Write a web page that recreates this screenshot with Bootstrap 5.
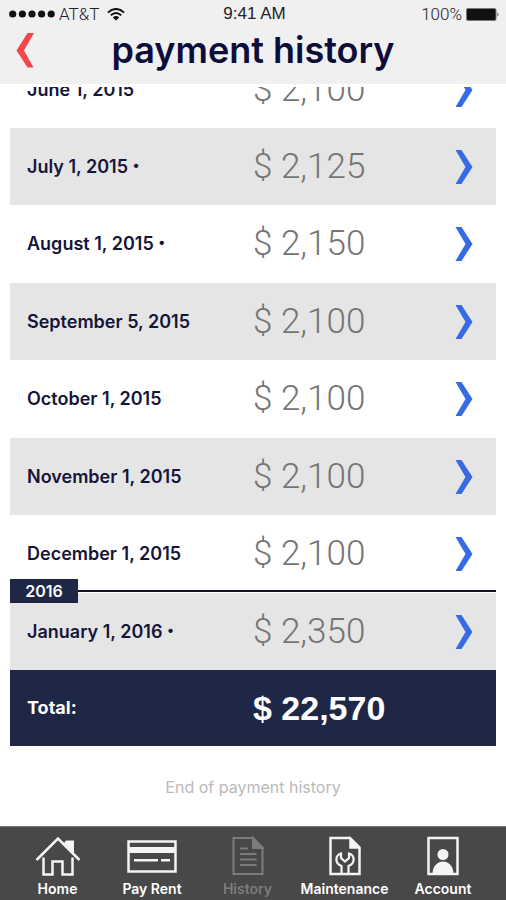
<!DOCTYPE html>
<html lang="en">
<head>
<meta charset="utf-8">
<meta name="viewport" content="width=device-width, initial-scale=1">
<title>Payment history</title>
<link href="https://cdn.jsdelivr.net/npm/bootstrap@5.3.0/dist/css/bootstrap.min.css" rel="stylesheet">
<style>
  :root { --navy: #1e2846; --ink: #15153a; --stripe: #e5e5e5; --bar: #484848; }
  body { font-family: Inter, "Open Sans", sans-serif; background: #fff; color: var(--ink); }
  svg { display: block; }
  .app-head { background: #f0f0f0; border-bottom: 3px solid #fff; height: 87px; }
  .status-bar { height: 28px; padding: 0 6px 0 9px; font-size: 17px; line-height: 28px; color: #222; }
  .status-side { flex: 1 1 0; }
  .carrier, .charge { font-family: Roboto, sans-serif; font-weight: 300; }
  .clock { font-family: "Liberation Sans", sans-serif; }
  .title-bar { height: 44px; padding: 0 15px; }
  .title-bar h1 { font-size: 36px; line-height: 44px; font-weight: 600; color: #0d0d3a; }
  .back-btn { width: 22px; }
  .history { padding: 52px 10px 0; }
  .pay-table { table-layout: fixed; line-height: 24px; }
  .pay-table th, .pay-table td { padding: 0; vertical-align: middle; border: 0; }
  .pay-table tr { height: 78px; }
  .pay-table tr:first-child { height: 76px; }
  .pay-table tr.alt { height: 77px; background: var(--stripe); }
  .col-date { width: 50%; }
  .col-go { width: 50px; }
  .pay-date { font-size: 18px; font-weight: 600; padding-left: 17px !important; }
  .flag { font-size: 14px; line-height: 14px; vertical-align: 3px; }
  .pay-sum { font-family: Roboto, sans-serif; font-size: 35px; font-weight: 300; color: #757575; }
  .pay-table tr.total-row { height: 76px; background: var(--navy); color: #fff; }
  .total-row .pay-date { font-weight: 700; }
  .total-row .pay-sum { font-family: "Liberation Sans", sans-serif; font-size: 34px; font-weight: 700; color: #fff; }
  .year-mark { top: -14px; left: 0; right: 0; }
  .year-tag { width: 68px; background: var(--navy); color: #fff; font-size: 16px; font-weight: 600; line-height: 24px; text-align: center; }
  .year-line { height: 2px; background: #14141e; }
  .end-note { font-size: 16px; line-height: 24px; color: #b9b9b9; margin: 29px 0 100px; }
  .tab-bar { background: var(--bar); border-top: 1px solid #777; padding: 8px 13px 0 10px; height: 74px; display: grid; grid-template-columns: 95fr 94fr 97fr 97fr 100fr; }
  .tab-bar a { color: #fff; font-size: 14px; line-height: 20px; font-weight: 600; text-decoration: none; }
  .tab-bar a.active { color: #7c7c7c; }
</style>
</head>
<body>
<header class="app-head fixed-top">
  <div class="status-bar d-flex align-items-center">
    <div class="status-side d-flex align-items-center">
      <svg width="46" height="8" viewBox="0 0 46 8" fill="#111" aria-hidden="true"><circle cx="3.700" cy="4" r="3.600"/><circle cx="13.400" cy="4" r="3.600"/><circle cx="23" cy="4" r="3.600"/><circle cx="32.600" cy="4" r="3.600"/><circle cx="42.200" cy="4" r="3.600"/></svg>
      <span class="carrier ms-1 me-1">AT&amp;T</span>
      <svg class="ms-1" width="18" height="13" viewBox="0 0 18 13" fill="none" stroke="#111" stroke-width="2" aria-hidden="true"><path d="M1 4.500Q9-2.500 17 4.500M3.800 7.300Q9 2.800 14.200 7.300"/><path d="M9 12.500L5.800 9.400Q9 6.800 12.200 9.400Z" fill="#111" stroke="none"/></svg>
    </div>
    <span class="clock">9:41 AM</span>
    <div class="status-side d-flex align-items-center justify-content-end">
      <span class="charge me-1">100%</span>
      <svg width="34" height="13" viewBox="0 0 34 13" aria-hidden="true"><rect x=".5" y=".5" width="29.500" height="12" rx="1.500" fill="#111" stroke="#777"/><path d="M31.500 4.500q2 2 0 4z" fill="#333"/></svg>
    </div>
  </div>
  <div class="title-bar d-flex align-items-center">
    <button type="button" class="back-btn btn p-0 border-0" aria-label="Back"><svg width="20" height="35" viewBox="0 0 20 35" fill="#f2474b"><path d="M12.500 0H19L9 17.500 18.500 34.500H12.500L1.500 17.500Z"/></svg></button>
    <h1 class="flex-grow-1 text-center m-0">payment history</h1>
    <span class="back-btn"></span>
  </div>
</header>

<main class="history">
  <table class="pay-table w-100">
    <colgroup><col class="col-date"><col><col class="col-go"></colgroup>
    <tbody>
      <tr><th scope="row" class="pay-date">June 1, 2015</th><td class="pay-sum">$ 2,100</td><td><button type="button" class="btn p-0 border-0 ps-2" aria-label="June 1, 2015 details"><svg width="20" height="34" viewBox="0 0 20 34" fill="#356be6"><path d="M1.500 0H7.500L18.500 17 7.500 34H1.500L11.500 17Z"/></svg></button></td></tr>
      <tr class="alt"><th scope="row" class="pay-date">July 1, 2015 <span class="flag">•</span></th><td class="pay-sum">$ 2,125</td><td><button type="button" class="btn p-0 border-0 ps-2" aria-label="July 1, 2015 details"><svg width="20" height="34" viewBox="0 0 20 34" fill="#356be6"><path d="M1.500 0H7.500L18.500 17 7.500 34H1.500L11.500 17Z"/></svg></button></td></tr>
      <tr><th scope="row" class="pay-date">August 1, 2015 <span class="flag">•</span></th><td class="pay-sum">$ 2,150</td><td><button type="button" class="btn p-0 border-0 ps-2" aria-label="August 1, 2015 details"><svg width="20" height="34" viewBox="0 0 20 34" fill="#356be6"><path d="M1.500 0H7.500L18.500 17 7.500 34H1.500L11.500 17Z"/></svg></button></td></tr>
      <tr class="alt"><th scope="row" class="pay-date">September 5, 2015</th><td class="pay-sum">$ 2,100</td><td><button type="button" class="btn p-0 border-0 ps-2" aria-label="September 5, 2015 details"><svg width="20" height="34" viewBox="0 0 20 34" fill="#356be6"><path d="M1.500 0H7.500L18.500 17 7.500 34H1.500L11.500 17Z"/></svg></button></td></tr>
      <tr><th scope="row" class="pay-date">October 1, 2015</th><td class="pay-sum">$ 2,100</td><td><button type="button" class="btn p-0 border-0 ps-2" aria-label="October 1, 2015 details"><svg width="20" height="34" viewBox="0 0 20 34" fill="#356be6"><path d="M1.500 0H7.500L18.500 17 7.500 34H1.500L11.500 17Z"/></svg></button></td></tr>
      <tr class="alt"><th scope="row" class="pay-date">November 1, 2015</th><td class="pay-sum">$ 2,100</td><td><button type="button" class="btn p-0 border-0 ps-2" aria-label="November 1, 2015 details"><svg width="20" height="34" viewBox="0 0 20 34" fill="#356be6"><path d="M1.500 0H7.500L18.500 17 7.500 34H1.500L11.500 17Z"/></svg></button></td></tr>
      <tr><th scope="row" class="pay-date">December 1, 2015</th><td class="pay-sum">$ 2,100</td><td><button type="button" class="btn p-0 border-0 ps-2" aria-label="December 1, 2015 details"><svg width="20" height="34" viewBox="0 0 20 34" fill="#356be6"><path d="M1.500 0H7.500L18.500 17 7.500 34H1.500L11.500 17Z"/></svg></button></td></tr>
      <tr class="alt position-relative"><th scope="row" class="pay-date"><div class="year-mark position-absolute d-flex align-items-center"><span class="year-tag">2016</span><span class="year-line flex-grow-1"></span></div>January 1, 2016 <span class="flag">•</span></th><td class="pay-sum">$ 2,350</td><td><button type="button" class="btn p-0 border-0 ps-2" aria-label="January 1, 2016 details"><svg width="20" height="34" viewBox="0 0 20 34" fill="#356be6"><path d="M1.500 0H7.500L18.500 17 7.500 34H1.500L11.500 17Z"/></svg></button></td></tr>
    </tbody>
    <tfoot>
      <tr class="total-row"><th scope="row" class="pay-date">Total:</th><td class="pay-sum" colspan="2">$ 22,570</td></tr>
    </tfoot>
  </table>
  <p class="end-note text-center">End of payment history</p>
</main>

<nav class="tab-bar fixed-bottom" aria-label="Main">
  <a href="#" class="d-flex flex-column align-items-center">
    <svg width="46" height="44" viewBox="0 0 46 44" fill="none" stroke="#f4f4f4" stroke-width="2.500"><path d="M1.500 25L23 3.500 44.500 25"/><path d="M8.500 22.500V39.500H17.500V26.500H27.500V39.500H37.500V22.500"/><path d="M29 8L31 5.500H39V19Z" fill="#f4f4f4" stroke="none"/></svg>
    <span>Home</span></a>
  <a href="#" class="d-flex flex-column align-items-center">
    <svg width="52" height="44" viewBox="0 0 52 44"><path d="M2.500 6.500H49.500V36.500H2.500Z" fill="none" stroke="#f4f4f4" stroke-width="2.500"/><path d="M3 12H49V18H3ZM8 24H32V26.500H8ZM35 24H44V26.500H35Z" fill="#f4f4f4"/></svg>
    <span>Pay Rent</span></a>
  <a href="#" class="active d-flex flex-column align-items-center" aria-current="page">
    <svg width="32" height="44" viewBox="0 0 32 44" fill="none" stroke="#7c7c7c" stroke-width="2"><path d="M1.500 3H21L30.500 12.500V39H1.500Z"/><path d="M21 3V13H30.500Z" fill="#7c7c7c"/><path d="M8 13.500H16M8 19H24.500M8 24.500H24.500M8 30H24.500"/></svg>
    <span>History</span></a>
  <a href="#" class="d-flex flex-column align-items-center">
    <svg width="32" height="44" viewBox="0 0 32 44" fill="none" stroke="#f4f4f4" stroke-width="2.500"><path d="M1.500 3H21L30.500 12.500V39H1.500Z"/><path d="M21 3V13H30.500Z" fill="#f4f4f4" stroke-width="1.500"/><path d="M12.500 39V31C5.500 28 6 20.500 12 18.500V23L16 26.500 20 23V18.500C26 20.500 26.500 28 19.500 31V39" stroke-width="2.200"/></svg>
    <span>Maintenance</span></a>
  <a href="#" class="d-flex flex-column align-items-center">
    <svg width="34" height="44" viewBox="0 0 34 44"><path d="M2.500 3H31.500V39H2.500Z" fill="none" stroke="#f4f4f4" stroke-width="2.500"/><circle cx="17" cy="19.500" r="5.500" fill="#f4f4f4"/><path d="M6.500 38.500C7 22.500 27 22.500 27.500 38.500Z" fill="#f4f4f4"/></svg>
    <span>Account</span></a>
</nav>
<script src="https://cdn.jsdelivr.net/npm/bootstrap@5.3.0/dist/js/bootstrap.bundle.min.js"></script>
</body>
</html>
